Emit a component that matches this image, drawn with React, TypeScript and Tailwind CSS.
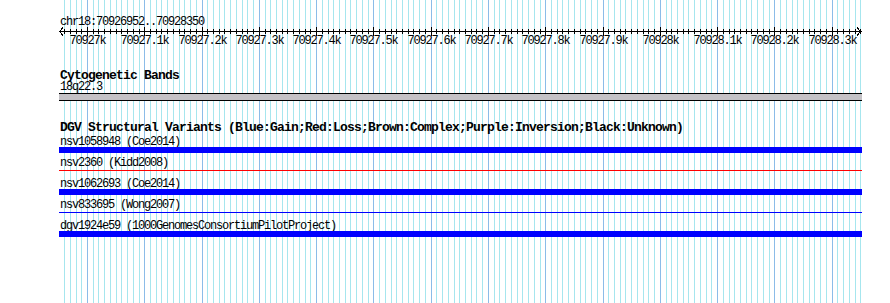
// Genome browser track panel: ruler, cytoband, DGV structural variants

const START = 70926952;
const END = 70928350;
const PANEL_W = 803;
const SCALE = 0.5728;

const toX = (p: number) => Math.round(0.5 + (p - START) * SCALE);

const MINOR = '#a6e6ee';
const MAJOR = '#8cbce8';

const gridPositions: number[] = [];
for (let p = Math.ceil(START / 10) * 10; p <= END; p += 10) gridPositions.push(p);

const majorLabel = (p: number) => {
  const k = p / 1000;
  return `${Number.isInteger(k) ? k : k.toFixed(1)}k`;
};

// gd-style fixed fonts: 6px and 7px per glyph
const small =
  "font-['Liberation_Mono',monospace] text-[12px] tracking-[-1.2px] text-black whitespace-pre";
const bold =
  "font-['Liberation_Mono',monospace] font-bold text-[13px] tracking-[-0.8px] text-black whitespace-pre";

type Variant = { label: string; kind: 'gain' | 'loss' | 'thin-blue' };

const variants: Variant[] = [
  { label: 'nsv1058948 (Coe2014)', kind: 'gain' },
  { label: 'nsv2360 (Kidd2008)', kind: 'loss' },
  { label: 'nsv1062693 (Coe2014)', kind: 'gain' },
  { label: 'nsv833695 (Wong2007)', kind: 'thin-blue' },
  { label: 'dgv1924e59 (1000GenomesConsortiumPilotProject)', kind: 'gain' },
];

function Grid() {
  return (
    <svg
      className="absolute left-[59px] top-0"
      width={PANEL_W}
      height={303}
      shapeRendering="crispEdges"
    >
      {gridPositions.map((p) => (
        <rect key={p} x={toX(p)} y={0} width={1} height={303} fill={p % 100 === 0 ? MAJOR : MINOR} />
      ))}
    </svg>
  );
}

function Ruler() {
  return (
    <svg className="block -mt-[1px]" width={PANEL_W} height={20} shapeRendering="crispEdges">
      <rect x={0} y={4} width={PANEL_W} height={1} fill="#000" />
      <polyline points="4,0.5 0.5,4.5 4,8.5" fill="none" stroke="#000" strokeWidth={1} />
      <polyline points={`${PANEL_W - 5},0.5 ${PANEL_W - 1.5},4.5 ${PANEL_W - 5},8.5`} fill="none" stroke="#000" strokeWidth={1} />
      {gridPositions.map((p) =>
        p % 100 === 0 ? (
          <rect key={p} x={toX(p)} y={0} width={1} height={9} fill="#000" />
        ) : (
          <rect key={p} x={toX(p)} y={2} width={1} height={5} fill="#000" />
        ),
      )}
      {gridPositions
        .filter((p) => p % 100 === 0)
        .map((p) => (
          <text
            key={p}
            x={toX(p) + 0.5}
            y={17}
            textAnchor="middle"
            fontFamily="'Liberation Mono', monospace"
            fontSize={12}
            letterSpacing={-1.2}
            fill="#000"
          >
            {majorLabel(p)}
          </text>
        ))}
    </svg>
  );
}

function VariantRow({ v }: { v: Variant }) {
  return (
    <div className="flex flex-col">
      <div className={`${small} h-[10px] leading-[10px] pl-[1px]`}>{v.label}</div>
      <div className="h-[6px] flex flex-col">
        {v.kind === 'gain' && <div className="h-[6px] bg-[#0000ff]" />}
        {v.kind === 'loss' && <div className="mt-[2px] h-[1px] bg-[#ff0000]" />}
        {v.kind === 'thin-blue' && <div className="mt-[2px] h-[1px] bg-[#0000ff]" />}
      </div>
    </div>
  );
}

export default function App() {
  return (
    <div className="relative w-[890px] h-[303px] bg-white overflow-hidden">
      <Grid />

      <div className="relative ml-[59px] w-[803px] pt-[16px]">
        {/* Ruler */}
        <div className={`${small} leading-[12px] pl-[1px]`}>chr18:70926952..70928350</div>
        <Ruler />

        {/* Cytogenetic bands */}
        <div className={`${bold} leading-[13px] mt-[22px] pl-[1px]`}>Cytogenetic Bands</div>
        <div className={`${small} leading-[11px] pl-[1px]`}>18q22.3</div>
        <div className="h-[8px] border-y border-black bg-[#c4c2c6]" />

        {/* DGV */}
        <div className={`${bold} leading-[12px] mt-[21px] pl-[1px]`}>
          DGV Structural Variants (Blue:Gain;Red:Loss;Brown:Complex;Purple:Inversion;Black:Unknown)
        </div>
        <div className="mt-[3px] flex flex-col gap-[5px]">
          {variants.map((v) => (
            <VariantRow key={v.label} v={v} />
          ))}
        </div>
      </div>
    </div>
  );
}
